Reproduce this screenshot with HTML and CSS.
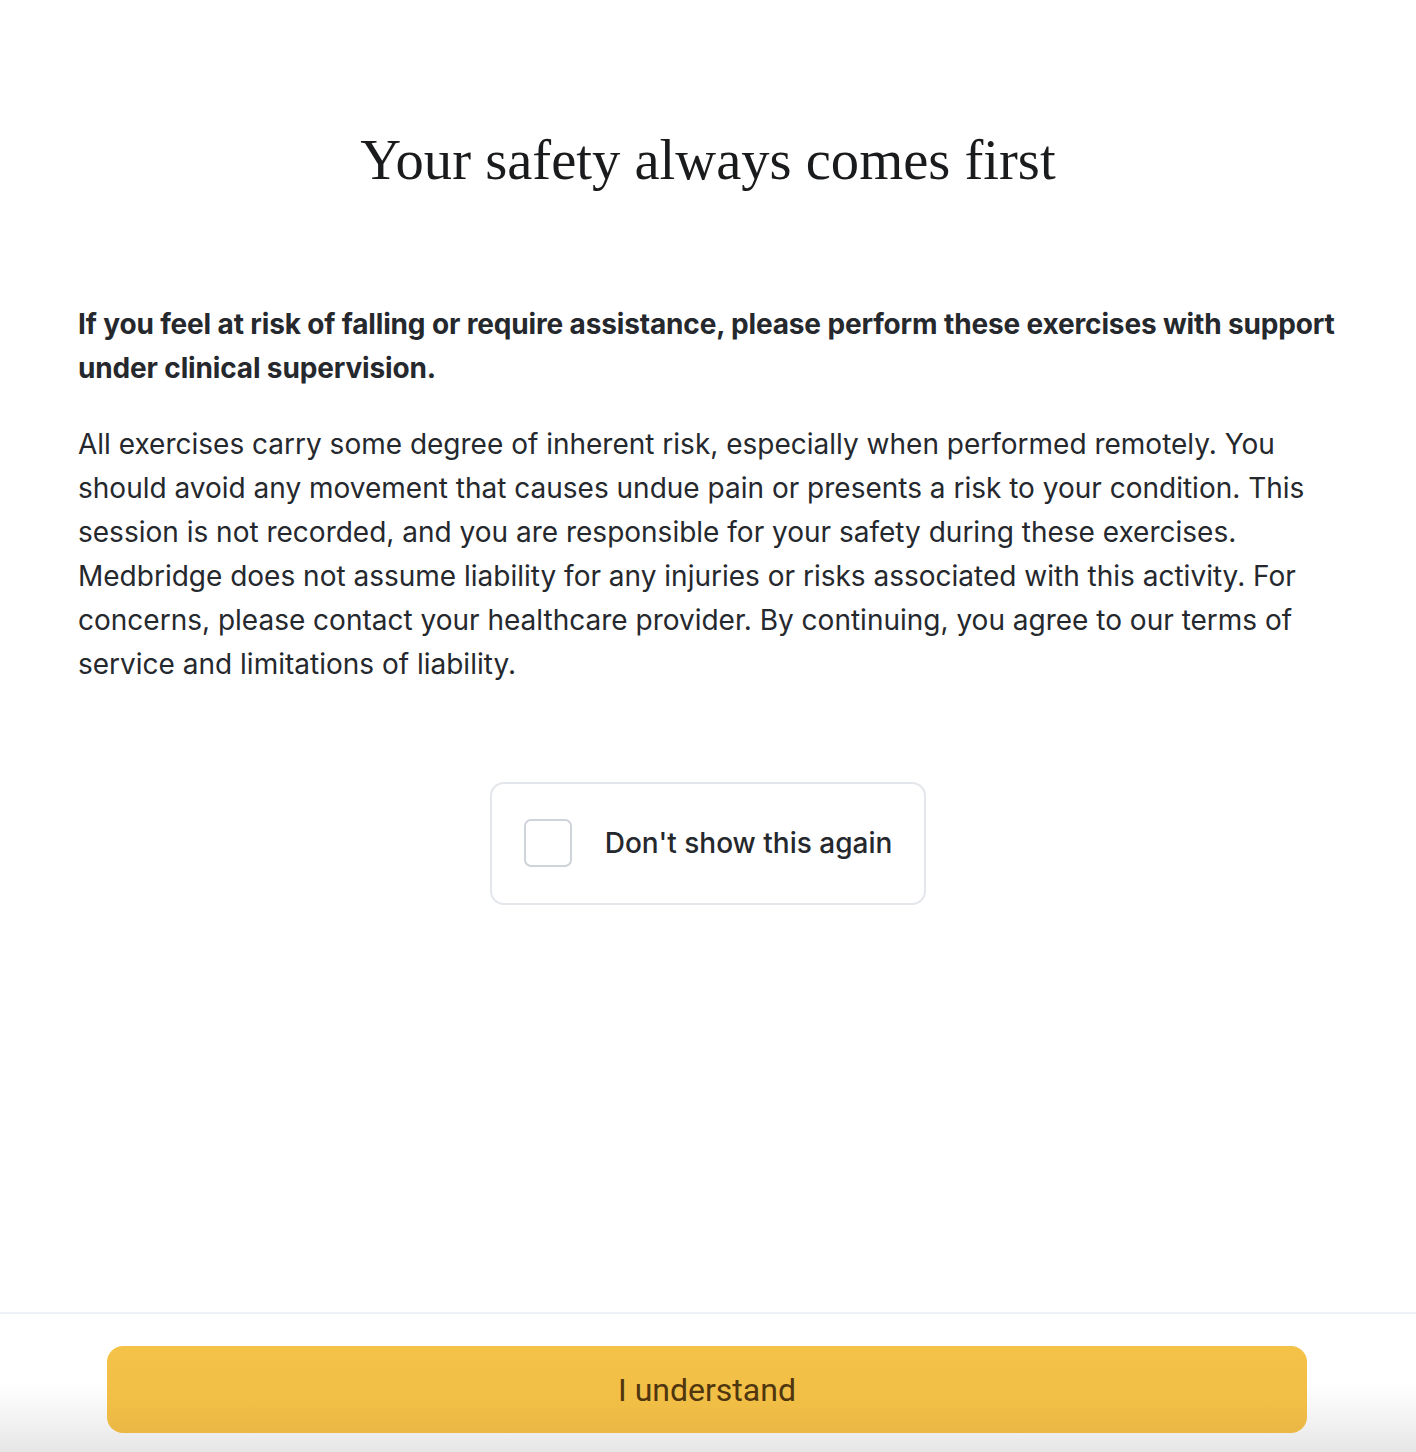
FILE: index.html
```html
<!DOCTYPE html>
<html lang="en">
<head>
<meta charset="utf-8">
<title>Your safety always comes first</title>
<link rel="stylesheet" href="styles.css">
</head>
<body>
<div class="page">
  <main class="content">
    <h1 class="title">Your safety always comes first</h1>
    <p class="lead">If you feel at risk of falling or require assistance, please perform these exercises with support under clinical supervision.</p>
    <p class="body">All exercises carry some degree of inherent risk, especially when performed remotely. You should avoid any movement that causes undue pain or presents a risk to your condition. This session is not recorded, and you are responsible for your safety during these exercises. Medbridge does not assume liability for any injuries or risks associated with this activity. For concerns, please contact your healthcare provider. By continuing, you agree to our terms of service and limitations of liability.</p>
    <div class="option-wrap">
      <label class="option">
        <span class="box"></span>
        <span class="option-text">Don't show this again</span>
      </label>
    </div>
  </main>
  <footer class="footer">
    <button class="cta" type="button">I understand</button>
  </footer>
</div>
</body>
</html>
```
FILE: styles.css
```css
* { box-sizing: border-box; }
html, body { margin: 0; padding: 0; background: #fff; }
.page {
  min-height: 1452px;
  display: flex;
  flex-direction: column;
}
.content {
  flex: 1;
  padding: 128px 78px 0;
  font-family: "Inter", "Noto Sans", sans-serif;
  color: #25282d;
}
.title {
  margin: 0 0 110px;
  text-align: center;
  font-family: "Liberation Serif", "DejaVu Serif", serif;
  font-weight: 400;
  font-size: 56.6px;
  line-height: 64px;
  color: #1a1b1d;
}
.lead {
  margin: 0 0 32px;
  font-size: 28px;
  line-height: 44px;
  font-weight: 700;
  letter-spacing: -0.15px;
}
.body {
  margin: 0;
  font-size: 28px;
  line-height: 44px;
  font-weight: 400;
  letter-spacing: 0;
}
.option-wrap {
  display: flex;
  justify-content: center;
  margin-top: 96px;
}
.option {
  display: flex;
  align-items: center;
  gap: 33px;
  padding: 35px 32px 36px;
  border: 2px solid #e3e6ea;
  border-radius: 14px;
}
.box {
  width: 48px;
  height: 48px;
  border: 2px solid #cfd4da;
  border-radius: 7px;
  background: #fff;
}
.option-text {
  font-size: 28px;
  font-weight: 500;
  color: #25282d;
}
.footer {
  border-top: 2px solid #eef1f5;
  padding: 32px 109px 19px 107px;
  background: linear-gradient(to bottom, #ffffff 0%, #ffffff 50%, #f2f2f2 78%, #e6e6e6 100%);
}
.cta {
  display: block;
  width: 100%;
  height: 87px;
  border: 0;
  border-radius: 16px;
  background: linear-gradient(to bottom, #f3c247 0%, #f2bf46 60%, #eab744 100%);
  font-family: "Roboto", "Liberation Sans", sans-serif;
  font-size: 32px;
  font-weight: 400;
  color: #4f360e;
  cursor: pointer;
}
```
